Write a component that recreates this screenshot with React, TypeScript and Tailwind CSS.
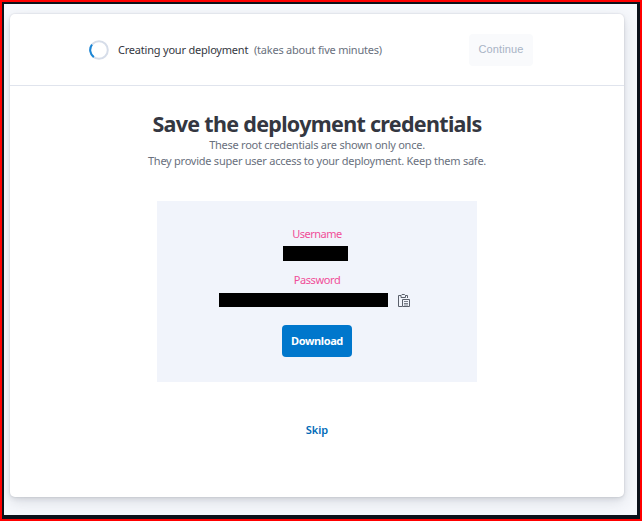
import React from "react";

function Spinner() {
  return (
    <svg width="20" height="20" viewBox="0 0 20 20" fill="none" className="block shrink-0">
      <circle cx="10" cy="10" r="8.8" stroke="#d6dde9" strokeWidth="2" />
      <path d="M3 4.6A8.8 8.8 0 0 0 4.8 17.1" stroke="#1a86d6" strokeWidth="2" />
    </svg>
  );
}

function CopyIcon() {
  return (
    <svg width="12" height="13" viewBox="0 0 12 13" fill="none" stroke="#5b606b" className="block shrink-0">
      <path d="M3 1.5H.5v11H4M7.5 1.5h2V4" />
      <path d="M3 3.5V1.5L4 .5h2.5l1 1v2z" />
      <path d="M4.5 5.5h7v7h-7z" />
      <path d="M6 7.5h4M6 9.5h4M6 11h4" stroke="#7b808a" />
    </svg>
  );
}

export default function App() {
  return (
    <div className="h-[521px] w-[642px] overflow-hidden border-2 border-[#ff0000] bg-[#0b111a] pt-[2px] pr-[3px] pb-[4px] pl-[2px] font-['Noto_Sans','Open_Sans',sans-serif]">
      <div className="h-[511px] overflow-hidden bg-[#f6f8fc] pt-[10px] pl-[6px]">
        <main className="h-[483px] w-[614px] rounded-[5px] bg-white shadow-[0_0_1px_1px_rgba(60,65,80,0.05),0_2px_4px_rgba(60,65,80,0.1),0_5px_14px_rgba(60,65,80,0.15)]">
          <header className="flex h-[72px] items-center border-b border-[#e0e4ed] pl-[79px]">
            <Spinner />
            <span className="ml-[9px] w-[136px] whitespace-nowrap pt-px text-[11px] tracking-[-0.21px] text-[#343741]">Creating your deployment</span>
            <span className="w-[215px] whitespace-nowrap pt-px text-[11px] tracking-[-0.22px] text-[#69707d]">(takes about five minutes)</span>
            <button disabled className="h-8 w-16 rounded-[4px] bg-[#f9fafc] font-['Liberation_Sans',sans-serif] text-[11px] tracking-[0.15px] text-[#a8b3c5]">Continue</button>
          </header>
          <section className="flex flex-col items-center pt-[25px]">
            <h1 className="whitespace-nowrap text-[21.5px] font-bold leading-[26px] tracking-[-0.7px] text-[#343741]">Save the deployment credentials</h1>
            <p className="whitespace-nowrap text-center text-[11px] leading-4 tracking-[-0.25px] text-[#69707d]">
              These root credentials are shown only once.
              <br />
              They provide super user access to your deployment. Keep them safe.
            </p>
            <div className="mt-[32px] flex h-[181px] w-[320px] flex-col items-center bg-[#f1f4fb] pt-[25px]">
              <span className="text-[11px] leading-4 tracking-[-0.5px] text-[#f04e98]">Username</span>
              <div className="mt-[4px] ml-[-3px] h-[15px] w-[65px] bg-black" />
              <span className="mt-[11px] text-[11px] leading-4 tracking-[-0.4px] text-[#f04e98]">Password</span>
              <div className="mt-[5px] ml-[-6px] flex items-center gap-[10px]">
                <div className="h-[14px] w-[169px] bg-black" />
                <CopyIcon />
              </div>
              <button className="mt-[18px] h-8 w-[70px] rounded-[4px] bg-[#0077cc] text-[11px] font-bold tracking-[-0.4px] text-white">Download</button>
            </div>
            <a className="mt-[40px] text-[11px] font-semibold leading-4 text-[#006bb8]">Skip</a>
          </section>
        </main>
      </div>
    </div>
  );
}
